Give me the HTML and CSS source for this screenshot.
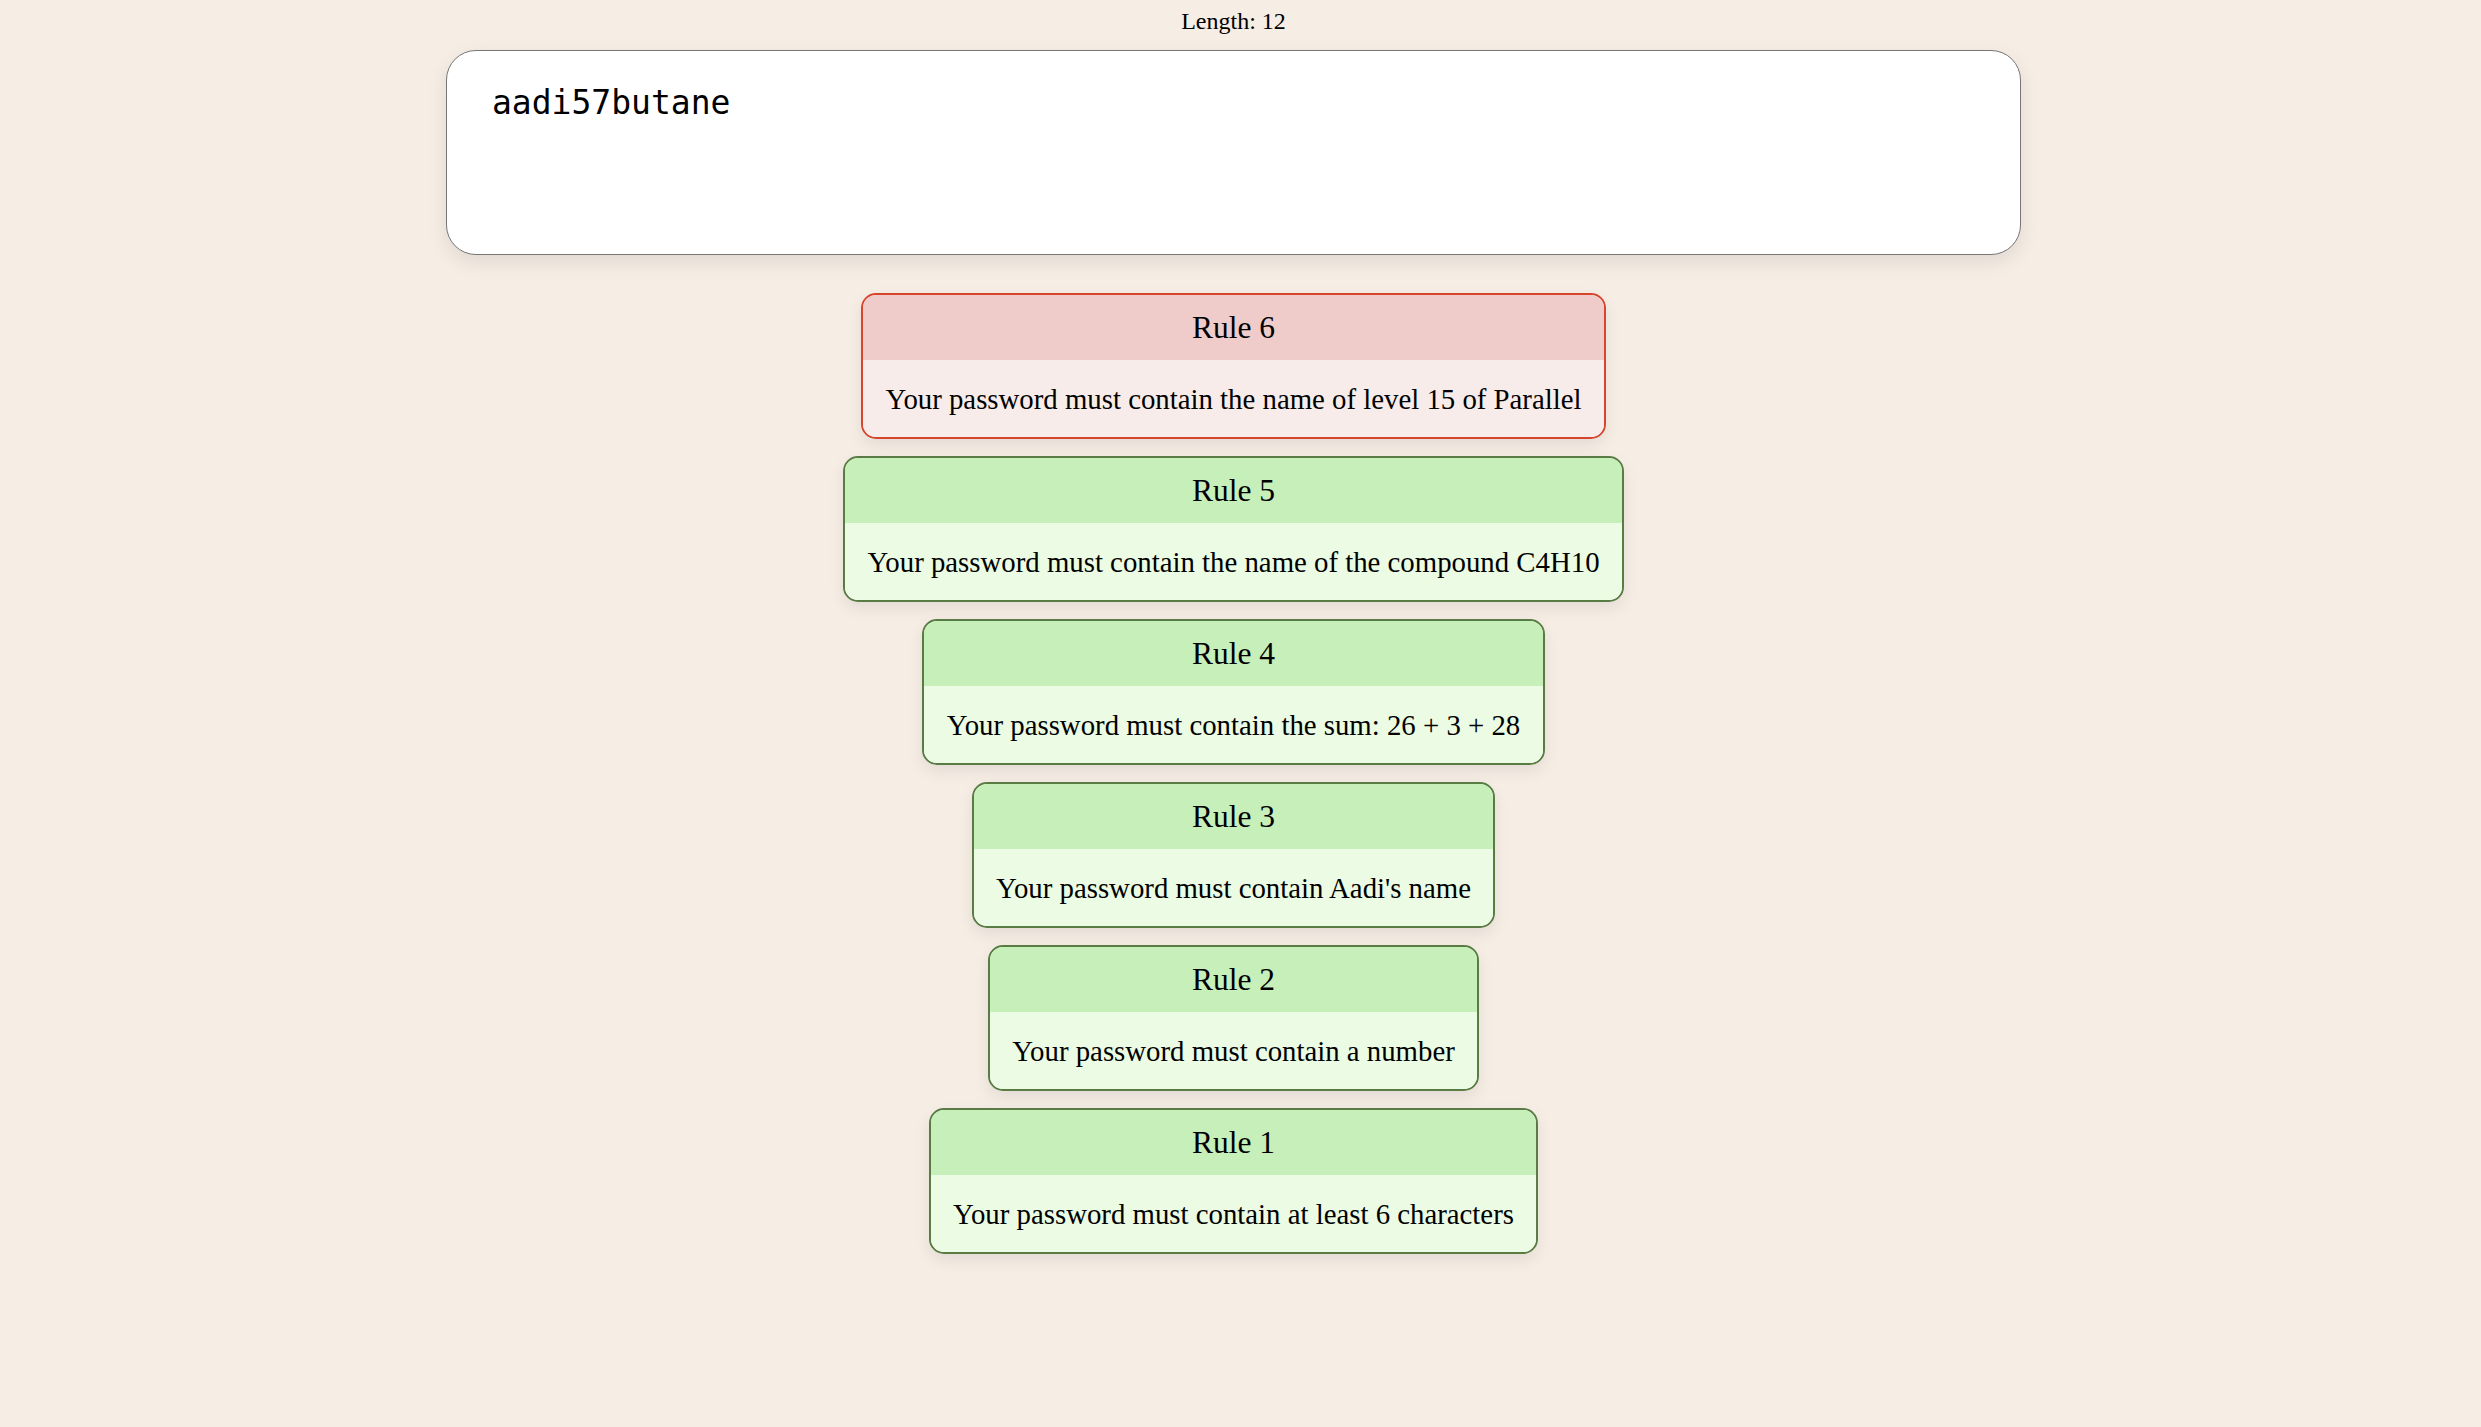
FILE: index.html
```html
<!DOCTYPE html>
<html lang="en">
<head>
<meta charset="utf-8">
<title>Password Game</title>
<link rel="stylesheet" href="styles.css">
</head>
<body>
<div class="page">
  <div class="length">Length: 12</div>
  <div class="pwbox">aadi57butane</div>
  <div class="rules">
    <div class="rule rule-fail">
      <div class="rule-head">Rule 6</div>
      <div class="rule-body">Your password must contain the name of level 15 of Parallel</div>
    </div>
    <div class="rule rule-pass">
      <div class="rule-head">Rule 5</div>
      <div class="rule-body">Your password must contain the name of the compound C4H10</div>
    </div>
    <div class="rule rule-pass">
      <div class="rule-head">Rule 4</div>
      <div class="rule-body">Your password must contain the sum: 26 + 3 + 28</div>
    </div>
    <div class="rule rule-pass">
      <div class="rule-head">Rule 3</div>
      <div class="rule-body">Your password must contain Aadi's name</div>
    </div>
    <div class="rule rule-pass">
      <div class="rule-head">Rule 2</div>
      <div class="rule-body">Your password must contain a number</div>
    </div>
    <div class="rule rule-pass">
      <div class="rule-head">Rule 1</div>
      <div class="rule-body">Your password must contain at least 6 characters</div>
    </div>
  </div>
</div>
</body>
</html>
```
FILE: styles.css
```css
html, body {
  margin: 0;
  padding: 0;
}

body {
  background: #f6ede5;
  font-family: "Liberation Serif", "Times New Roman", serif;
  color: #000;
  min-height: 1427px;
}

.page {
  width: calc(100% - 14px);
  padding-top: 7px;
  display: flex;
  flex-direction: column;
  align-items: center;
}

.length {
  font-size: 24px;
  line-height: 28px;
  margin-bottom: 15px;
}

.pwbox {
  box-sizing: border-box;
  width: 1575px;
  height: 205px;
  background: #fff;
  border: 1px solid #767676;
  border-radius: 30px;
  padding: 33px 45px 31px;
  font-family: "DejaVu Sans Mono", monospace;
  font-size: 33px;
  line-height: 38px;
  box-shadow: 0 7px 20px rgba(0, 0, 0, 0.09);
}

.rules {
  margin-top: 38px;
  display: flex;
  flex-direction: column;
  align-items: center;
  gap: 17px;
}

.rule {
  border: 2px solid;
  border-radius: 15px;
  overflow: hidden;
  box-shadow: 0 6px 16px rgba(0, 0, 0, 0.08);
}

.rule-head {
  text-align: center;
  font-size: 31.5px;
  line-height: 35px;
  padding: 15px 22px;
}

.rule-body {
  text-align: center;
  font-size: 28.8px;
  line-height: 33px;
  padding: 23px 22.5px 21px;
  white-space: nowrap;
}

.rule-fail {
  border-color: #d8452f;
}

.rule-fail .rule-head {
  background: #efcbc9;
}

.rule-fail .rule-body {
  background: #f8ecea;
}

.rule-pass {
  border-color: #587c44;
}

.rule-pass .rule-head {
  background: #c7efba;
}

.rule-pass .rule-body {
  background: #ebfbe4;
}
```
